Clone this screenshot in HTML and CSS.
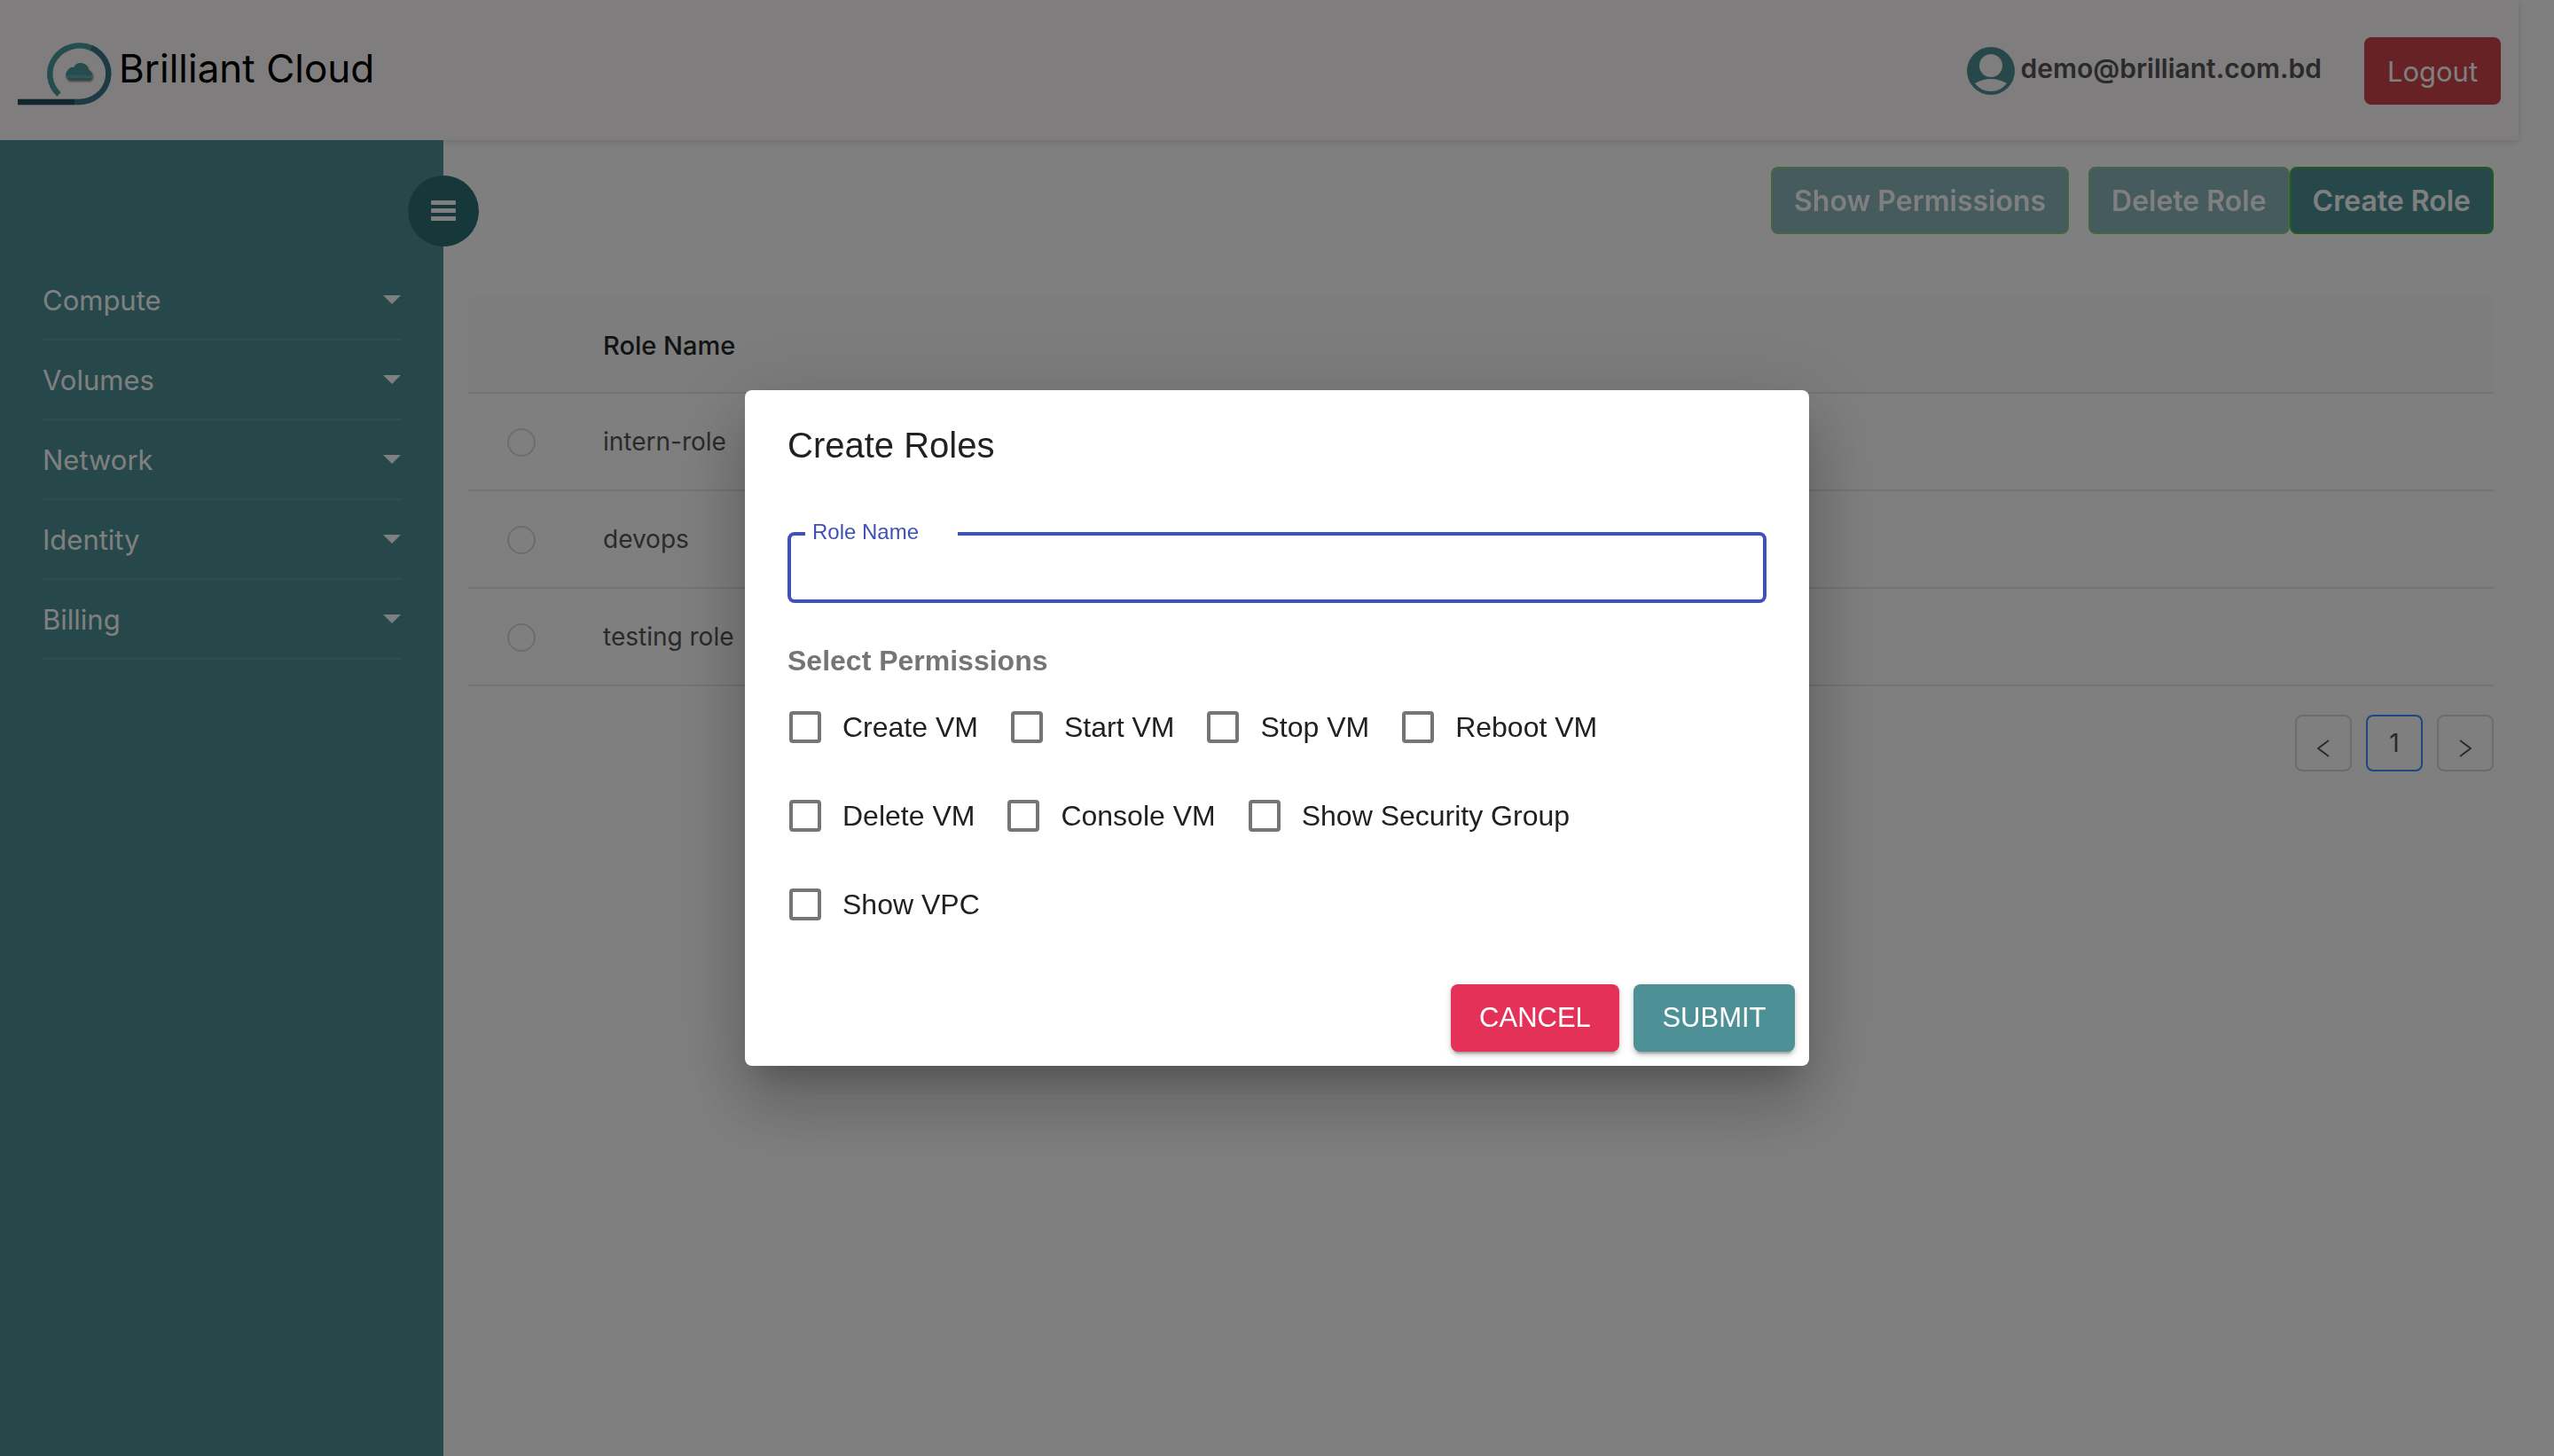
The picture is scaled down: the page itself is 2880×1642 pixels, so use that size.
FILE: index.html
```html
<!DOCTYPE html>
<html lang="en">
<head>
<meta charset="utf-8">
<title>Brilliant Cloud</title>
<link rel="stylesheet" href="styles.css">
</head>
<body>
<div class="app">
  <header class="topbar">
    <a class="brand" href="#">
      <svg class="brand-logo" viewBox="0 0 108 76" aria-hidden="true">
        <g fill="none" stroke-width="6.4">
          <path d="M46.500 61.500A33.500 32 0 0 1 84 9.500" stroke="#4d9a9a"/>
          <path d="M83 9A33.500 32 0 0 1 69 70H63" stroke="#3a7688"/>
          <path d="M0 70H64" stroke="#254c5a"/>
        </g>
        <path class="brand-cloud" d="M58 45a6 6 0 0 1-2-10 6 6 0 0 1 7-4 9 9 0 0 1 17 3 6 6 0 0 1 1 11z" fill="#4d9a9a"/>
        <text class="brand-mark" x="69" y="43" text-anchor="middle">brilliantcloud</text>
      </svg>
      <span class="brand-name">Brilliant Cloud</span>
    </a>
    <div class="account">
      <svg class="avatar" viewBox="0 0 54 54" aria-hidden="true">
        <circle cx="27" cy="27" r="27" fill="#4d9197"/>
        <circle cx="27" cy="21" r="13" fill="#fffafa"/>
        <path d="M9 41Q27 31 45 41Q38 50 27 50Q16 50 9 41z" fill="#fffafa"/>
      </svg>
      <span class="email">demo@brilliant.com.bd</span>
      <button class="logout" type="button">Logout</button>
    </div>
  </header>
  <div class="body">
    <nav class="sidebar">
      <button class="toggle" type="button" aria-label="Toggle menu">
        <svg viewBox="0 0 28 24" aria-hidden="true"><path d="M1 0h26a1 1 0 0 1 1 1v3a1 1 0 0 1-1 1H1a1 1 0 0 1-1-1V1a1 1 0 0 1 1-1zM1 9h26a1 1 0 0 1 1 1v3a1 1 0 0 1-1 1H1a1 1 0 0 1-1-1v-3a1 1 0 0 1 1-1zM1 18h26a1 1 0 0 1 1 1v3a1 1 0 0 1-1 1H1a1 1 0 0 1-1-1v-3a1 1 0 0 1 1-1z" fill="#fff"/></svg>
      </button>
      <ul class="menu">
        <li><a href="#">Compute</a></li>
        <li><a href="#">Volumes</a></li>
        <li><a href="#">Network</a></li>
        <li><a href="#">Identity</a></li>
        <li><a href="#">Billing</a></li>
      </ul>
    </nav>
    <main class="main">
      <div class="actions">
        <button class="action spaced" type="button" disabled>Show Permissions</button>
        <button class="action" type="button" disabled>Delete Role</button>
        <button class="action" type="button">Create Role</button>
      </div>
      <table class="roles">
        <thead><tr><th class="pick"></th><th>Role Name</th></tr></thead>
        <tbody>
          <tr><td class="pick"><input type="radio" name="role" aria-label="intern-role"></td><td>intern-role</td></tr>
          <tr><td class="pick"><input type="radio" name="role" aria-label="devops"></td><td>devops</td></tr>
          <tr><td class="pick"><input type="radio" name="role" aria-label="testing role"></td><td>testing role</td></tr>
        </tbody>
      </table>
      <div class="pager">
        <button type="button" aria-label="Previous page"><svg viewBox="0 0 14 20" aria-hidden="true"><path d="M13 1L1 10l12 9"/></svg></button>
        <button class="current" type="button">1</button>
        <button type="button" aria-label="Next page"><svg viewBox="0 0 14 20" aria-hidden="true"><path d="M1 1l12 9-12 9"/></svg></button>
      </div>
    </main>
  </div>
</div>

<div class="backdrop">
  <form class="dialog" role="dialog" aria-labelledby="dialog-title">
    <h2 class="dialog-title" id="dialog-title">Create Roles</h2>
    <div class="dialog-content">
      <fieldset class="field">
        <legend><label for="role-name">Role Name</label></legend>
        <input id="role-name" type="text">
      </fieldset>
      <h3 class="group-title">Select Permissions</h3>
      <div class="permissions">
        <label><input type="checkbox">Create VM</label>
        <label><input type="checkbox">Start VM</label>
        <label><input type="checkbox">Stop VM</label>
        <label><input type="checkbox">Reboot VM</label>
        <label><input type="checkbox">Delete VM</label>
        <label><input type="checkbox">Console VM</label>
        <label><input type="checkbox">Show Security Group</label>
        <label><input type="checkbox">Show VPC</label>
      </div>
    </div>
    <div class="dialog-actions">
      <button class="cancel" type="button">CANCEL</button>
      <button class="submit" type="submit">SUBMIT</button>
    </div>
  </form>
</div>
</body>
</html>
```
FILE: styles.css
```css
* {
  box-sizing: border-box;
}

body {
  margin: 0;
  background: #fff;
  color: #555;
  font-family: Inter, "Liberation Sans", sans-serif;
  font-size: 28px;
}

button,
input {
  font: inherit;
  margin: 0;
}

.app {
  display: flex;
  flex-direction: column;
  min-height: 100vh;
}

/* Top bar */
.topbar {
  display: flex;
  align-items: center;
  justify-content: space-between;
  height: 158px;
  margin-right: 40px;
  padding: 0 20px;
  background: #fffafa;
  box-shadow: 0 2px 8px rgba(0, 0, 0, 0.14);
}

.brand {
  display: flex;
  align-items: center;
  gap: 6px;
  color: #000;
  text-decoration: none;
}

.brand-logo {
  width: 108px;
  height: 76px;
  margin-top: 8px;
}

.brand-cloud {
  filter: drop-shadow(1px 2px 1px rgba(0, 0, 0, 0.5));
}

.brand-mark {
  fill: #8fc4c6;
  font-size: 5px;
}

.brand-name {
  padding-bottom: 4px;
  font-size: 44px;
}

.account {
  display: flex;
  align-items: center;
  padding-top: 2px;
}

.avatar {
  width: 54px;
  height: 54px;
}

.email {
  margin: 0 48px 0 6px;
  padding-bottom: 6px;
  font-size: 30px;
  font-weight: 600;
}

.logout {
  width: 154px;
  height: 76px;
  border: 0;
  border-radius: 8px;
  background: #cc444b;
  color: #fff;
  font-size: 31px;
}

/* Sidebar */
.body {
  display: flex;
  flex: 1;
}

.sidebar {
  position: relative;
  flex: 0 0 500px;
  padding: 136px 48px 0;
  background: #4d9197;
}

.toggle {
  position: absolute;
  top: 40px;
  right: -40px;
  display: flex;
  align-items: center;
  justify-content: center;
  width: 80px;
  height: 80px;
  padding: 0;
  border: 0;
  border-radius: 50%;
  background: #2d7075;
}

.toggle svg {
  width: 28px;
  height: 24px;
}

.menu {
  margin: 0;
  padding: 0;
  list-style: none;
}

.menu a {
  display: flex;
  align-items: center;
  justify-content: space-between;
  height: 90px;
  border-bottom: 2px solid #5a9ca0;
  color: #fff;
  font-size: 31px;
  text-decoration: none;
}

.menu a::after {
  content: "";
  border: 10px solid transparent;
  border-top-color: #fff;
  border-bottom: 0;
}

/* Roles page */
.main {
  flex: 1;
  padding: 30px 68px 0 28px;
}

.actions {
  display: flex;
  justify-content: flex-end;
}

.action {
  height: 76px;
  padding: 0 24px;
  border: 2px solid #4cae4c;
  border-radius: 8px;
  background: #4d9197;
  color: #fff;
  font-size: 32px;
  font-weight: 600;
}

.action:disabled {
  opacity: 0.65;
}

.spaced {
  margin-right: 22px;
}

.roles {
  width: 100%;
  margin-top: 70px;
  border-spacing: 0;
}

.roles th,
.roles td {
  height: 110px;
  padding: 0 32px;
  border-bottom: 2px solid #e8e8e8;
  text-align: left;
}

.roles th {
  padding-top: 2px;
  background: #fafafa;
  color: #262626;
  font-size: 29px;
  font-weight: 500;
}

.roles th:first-child {
  border-top-left-radius: 8px;
}

.roles th:last-child {
  border-top-right-radius: 8px;
}

.roles .pick {
  width: 120px;
  padding: 2px 0 0 44px;
}

.roles input {
  display: block;
  appearance: none;
  width: 32px;
  height: 32px;
  border: 2px solid #d9d9d9;
  border-radius: 50%;
}

.pager {
  display: flex;
  justify-content: flex-end;
  gap: 16px;
  margin-top: 32px;
}

.pager button {
  display: flex;
  align-items: center;
  justify-content: center;
  width: 64px;
  height: 64px;
  padding: 0;
  border: 2px solid #d9d9d9;
  border-radius: 8px;
  background: #fff;
  color: #555;
}

.pager .current {
  border-color: #3a90ff;
}

.pager svg {
  width: 14px;
  height: 20px;
  margin-top: 12px;
  fill: none;
  stroke: #555;
  stroke-width: 2;
}

/* Dialog */
.backdrop {
  position: fixed;
  inset: 0;
  display: flex;
  align-items: center;
  justify-content: center;
  background: rgba(0, 0, 0, 0.5);
  font-family: "Liberation Sans", Arial, sans-serif;
}

.dialog {
  width: 1200px;
  max-width: calc(100% - 128px);
  border-radius: 8px;
  background: #fff;
  color: #212121;
  font-size: 32px;
  box-shadow:
    0 22px 30px -14px rgba(0, 0, 0, 0.2),
    0 48px 76px 6px rgba(0, 0, 0, 0.14),
    0 18px 92px 16px rgba(0, 0, 0, 0.12);
}

.dialog-title {
  margin: 0;
  padding: 30px 48px 34px;
  font-size: 40px;
  font-weight: 400;
  line-height: 64px;
}

.dialog-content {
  padding: 22px 48px 24px;
}

.field {
  margin: 0;
  padding: 0 16px;
  border: 4px solid #3f51b5;
  border-radius: 8px;
}

.field legend {
  width: 172px;
  padding: 0 8px 4px;
  color: #3f51b5;
  font-size: 24px;
  line-height: 20px;
}

.field label {
  display: block;
}

.field input {
  display: block;
  width: 100%;
  height: 62px;
  padding: 0;
  border: 0;
  outline: 0;
}

.group-title {
  margin: 40px 0 0;
  color: #757575;
  font-size: 32px;
  font-weight: 700;
  line-height: 50px;
}

.permissions {
  display: flex;
  flex-wrap: wrap;
  column-gap: 37px;
}

.permissions label {
  display: flex;
  align-items: center;
  gap: 24px;
  height: 100px;
  padding-left: 2px;
  margin-right: -2px;
}

.permissions input {
  appearance: none;
  width: 36px;
  height: 36px;
  border: 4px solid #757575;
  border-radius: 4px;
}

.dialog-actions {
  display: flex;
  justify-content: flex-end;
  gap: 16px;
  padding: 16px;
}

.dialog-actions button {
  height: 76px;
  border: 0;
  border-radius: 8px;
  color: #fff;
  font-size: 31px;
  box-shadow:
    0 6px 2px -4px rgba(0, 0, 0, 0.2),
    0 4px 4px rgba(0, 0, 0, 0.14),
    0 2px 10px rgba(0, 0, 0, 0.12);
}

.dialog-actions .cancel {
  width: 190px;
  background: #e43158;
}

.dialog-actions .submit {
  width: 182px;
  background: #4d9197;
}
```
